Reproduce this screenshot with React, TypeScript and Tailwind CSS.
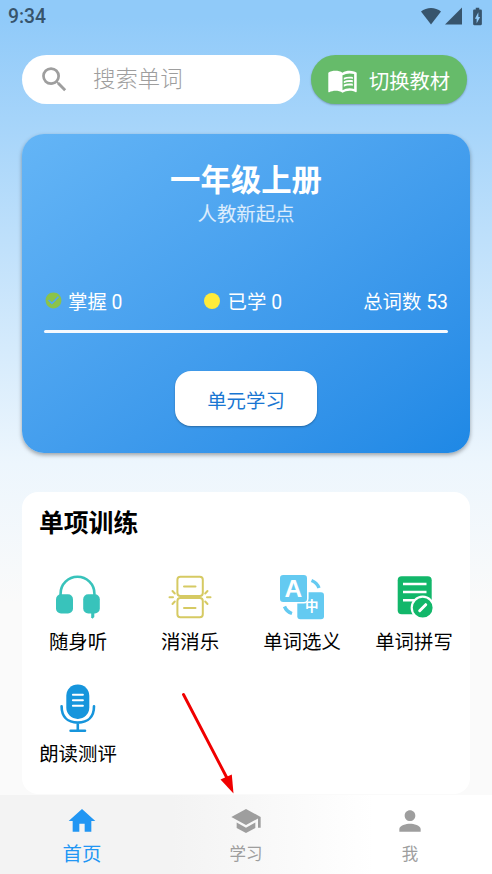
import type { ReactNode } from "react";
import {
  MdBatteryChargingFull,
  MdCheckCircle,
  MdHome,
  MdMenuBook,
  MdPerson,
  MdSchool,
  MdSearch,
} from "react-icons/md";

function HeadphonesIcon() {
  return (
    <svg width="48" height="48" viewBox="0 0 48 48" fill="#38c3bb">
      <path d="M6.600 25v-3.500a16.900 16.700 0 0 1 33.800 0V25" fill="none" stroke="#38c3bb" strokeWidth="2.600" />
      <rect x="2" y="22.300" width="17" height="19.200" rx="5" />
      <rect x="29.200" y="22.300" width="16.600" height="19.200" rx="5" />
      <path d="M37.200 40h3.100v5l-1.800 1.800-1.300-1.600z" />
    </svg>
  );
}

function MatchIcon() {
  return (
    <svg width="48" height="48" viewBox="0 0 48 48" fill="none" stroke="#d6ca63" strokeWidth="2" strokeLinecap="round">
      <rect x="11.400" y="4.700" width="25.400" height="19.300" rx="3" />
      <rect x="11.400" y="26" width="25.400" height="19.300" rx="3" />
      <path d="M18 14.500h11.500M18 36h11.500" />
      <path d="M3.500 25.200h3.500M6.500 19l2.300 2.500M6.500 32l2.300-2.500M44.500 25.200h-3.500M41.500 19l-2.300 2.500M41.500 32l-2.300-2.500" />
    </svg>
  );
}

function TranslateIcon() {
  return (
    <svg width="48" height="48" viewBox="0 0 48 48" fill="#64caf1">
      <rect x="19.300" y="20.300" width="26.700" height="27" rx="3" />
      <rect x="1.200" y="2.200" width="28.600" height="28.600" rx="4" stroke="#fff" strokeWidth="1.600" />
      <path d="M33.500 8.500a13 13 0 0 1 7.500 7.500M6.500 34.500a12 12 0 0 0 7.500 7" fill="none" stroke="#64caf1" strokeWidth="3.400" />
      <text x="15.400" y="25.200" textAnchor="middle" fontSize="24.500" fontWeight="700" fill="#fff" fontFamily="Liberation Sans, sans-serif">A</text>
      <text x="33.700" y="39.300" textAnchor="middle" fontSize="13.500" fontWeight="700" fill="#fff" fontFamily="Noto Sans CJK SC, sans-serif">中</text>
    </svg>
  );
}

function SpellIcon() {
  return (
    <svg width="48" height="48" viewBox="0 0 48 48" fill="#12b76a">
      <rect x="7.700" y="4.300" width="34" height="38" rx="4" />
      <path d="M13 11.900h23.500M13 20.100h23.500M13 28.300h12" stroke="#fff" strokeWidth="2.500" />
      <circle cx="32.700" cy="35.700" r="11" stroke="#fff" strokeWidth="2.200" />
      <path d="M29.700 38.700l6-6" stroke="#fff" strokeWidth="3" strokeLinecap="round" />
    </svg>
  );
}

function MicIcon() {
  return (
    <svg width="48" height="48" viewBox="0 0 48 48" fill="none" strokeLinecap="round">
      <rect x="12.300" y="0.400" width="23" height="34.500" rx="11.300" fill="#1695dc" />
      <path d="M18.900 10.700h10M18.900 16.200h10M18.900 21.700h10" stroke="#fff" strokeWidth="2" />
      <path d="M7.600 22.300c0 10 5.500 16.300 16.200 16.300s16.200-6.300 16.200-16.300M23.800 39v8M16.600 46.700h14.400" stroke="#1695dc" strokeWidth="2.600" />
    </svg>
  );
}

function Training({ icon, label }: { icon: ReactNode; label: string }) {
  return (
    <div className="flex h-28 flex-col items-center text-[19.4px] leading-7 text-black">
      {icon}
      <span className="mt-[9px] whitespace-nowrap">{label}</span>
    </div>
  );
}

export default function App() {
  return (
    <div className="relative flex h-[874px] w-[492px] flex-col overflow-hidden bg-[linear-gradient(180deg,#90caf9_0%,#90caf9_2%,#edf6fd_53%,#fafafa_69%)] font-['Roboto','Noto_Sans_CJK_SC',sans-serif]">

      {/* Status bar */}
      <div className="flex h-[33px] items-center justify-between pr-1 pl-2 text-[#37546c]">
        <span className="pt-0.5 text-[19.3px] font-medium">9:34</span>
        <div className="flex items-center">
          <svg width="22" height="18" viewBox="0 0 22 18" fill="currentColor">
            <path d="M1 4.500C6.500-.3 15.500-.3 21 4.500L11 17.500z" />
          </svg>
          <svg className="ml-[3px]" width="17" height="18" viewBox="0 0 17 18" fill="currentColor">
            <path d="M0 17.500L17 .5v17z" />
          </svg>
          <MdBatteryChargingFull className="ml-[5px]" size={21} />
        </div>
      </div>

      {/* Search */}
      <div className="mt-[22px] flex px-[22px]">
        <div className="flex h-[49px] w-[278px] items-center rounded-full bg-white pl-4 text-[#9e9e9e]">
          <MdSearch size={33} />
          <span className="ml-[22px] pt-px text-[22.4px] font-light">搜索单词</span>
        </div>
        <button className="ml-[11px] flex h-[49px] w-[156px] items-center rounded-full bg-[#66bb6a] pt-0.5 pl-4 text-white shadow-[0_1px_2px_rgba(0,0,0,0.25)]">
          <MdMenuBook size={31} />
          <span className="ml-[11px] pt-1 text-[20.3px] whitespace-nowrap">切换教材</span>
        </button>
      </div>

      {/* Book card */}
      <div className="mx-[22px] mt-[30px] flex h-80 flex-col items-center rounded-[22px] bg-linear-to-br from-[#64b5f6] to-[#1e88e5] px-[22px] text-white shadow-[0_2px_4px_rgba(0,0,0,0.35)]">
        <h1 className="mt-[27px] text-[30.4px] leading-10 font-bold">一年级上册</h1>
        <p className="text-[19.4px] leading-7 text-white/80">人教新起点</p>

        <div className="mt-[60px] flex w-full justify-between text-[19.4px] leading-7">
          <div className="flex items-center">
            <MdCheckCircle className="-mt-1 text-[#8bc34a]" size={19} />
            <span className="ml-[5px]">掌握 0</span>
          </div>
          <div className="flex items-center">
            <span className="-mt-1 size-4 rounded-full bg-[#ffeb3b]" />
            <span className="ml-2">已学 0</span>
          </div>
          <span>总词数 53</span>
        </div>
        <div className="mt-[13px] h-[3px] w-full rounded-full bg-[#f5f9fe]" />

        <button className="mt-[38px] h-[55px] w-[142px] rounded-2xl bg-white pt-1.5 text-[19.4px] text-[#1976d2] shadow-[0_1px_2px_rgba(0,0,0,0.3)]">
          单元学习
        </button>
      </div>

      {/* Training */}
      <div className="mx-[22px] mt-[39px] flex h-[302px] flex-col rounded-2xl bg-white">
        <h2 className="mt-3.5 ml-[17px] text-[24.8px] leading-9 font-bold text-black">单项训练</h2>
        <div className="mt-[30px] grid grid-cols-4">
          <Training icon={<HeadphonesIcon />} label="随身听" />
          <Training icon={<MatchIcon />} label="消消乐" />
          <Training icon={<TranslateIcon />} label="单词选义" />
          <Training icon={<SpellIcon />} label="单词拼写" />
          <Training icon={<MicIcon />} label="朗读测评" />
        </div>
      </div>

      {/* Bottom nav */}
      <nav className="mt-px grid h-[79px] grid-cols-3 bg-[linear-gradient(90deg,#f3f3f3_35%,#ffffff_76%)] text-[#9e9e9e]">
        <a className="flex flex-col items-center pt-[10px] text-[#2196f3]">
          <MdHome size={32} />
          <span className="pt-[3px] text-[19.4px] leading-[30px]">首页</span>
        </a>
        <a className="flex flex-col items-center pt-[10px]">
          <MdSchool size={32} />
          <span className="pt-[3px] text-[16.5px] leading-[30px]">学习</span>
        </a>
        <a className="flex flex-col items-center pt-[10px]">
          <MdPerson size={32} />
          <span className="pt-[3px] text-[16.5px] leading-[30px]">我</span>
        </a>
      </nav>

      {/* Pointer to the study tab */}
      <svg className="absolute top-[690px] left-[180px]" width="60" height="106" viewBox="0 0 60 106" fill="#f00000">
        <path d="M3.500 4.500L47.500 89" stroke="#f00000" strokeWidth="2.900" strokeLinecap="round" />
        <path d="M53.500 103.500L40.500 89.500L51.800 84.500z" />
      </svg>
    </div>
  );
}
